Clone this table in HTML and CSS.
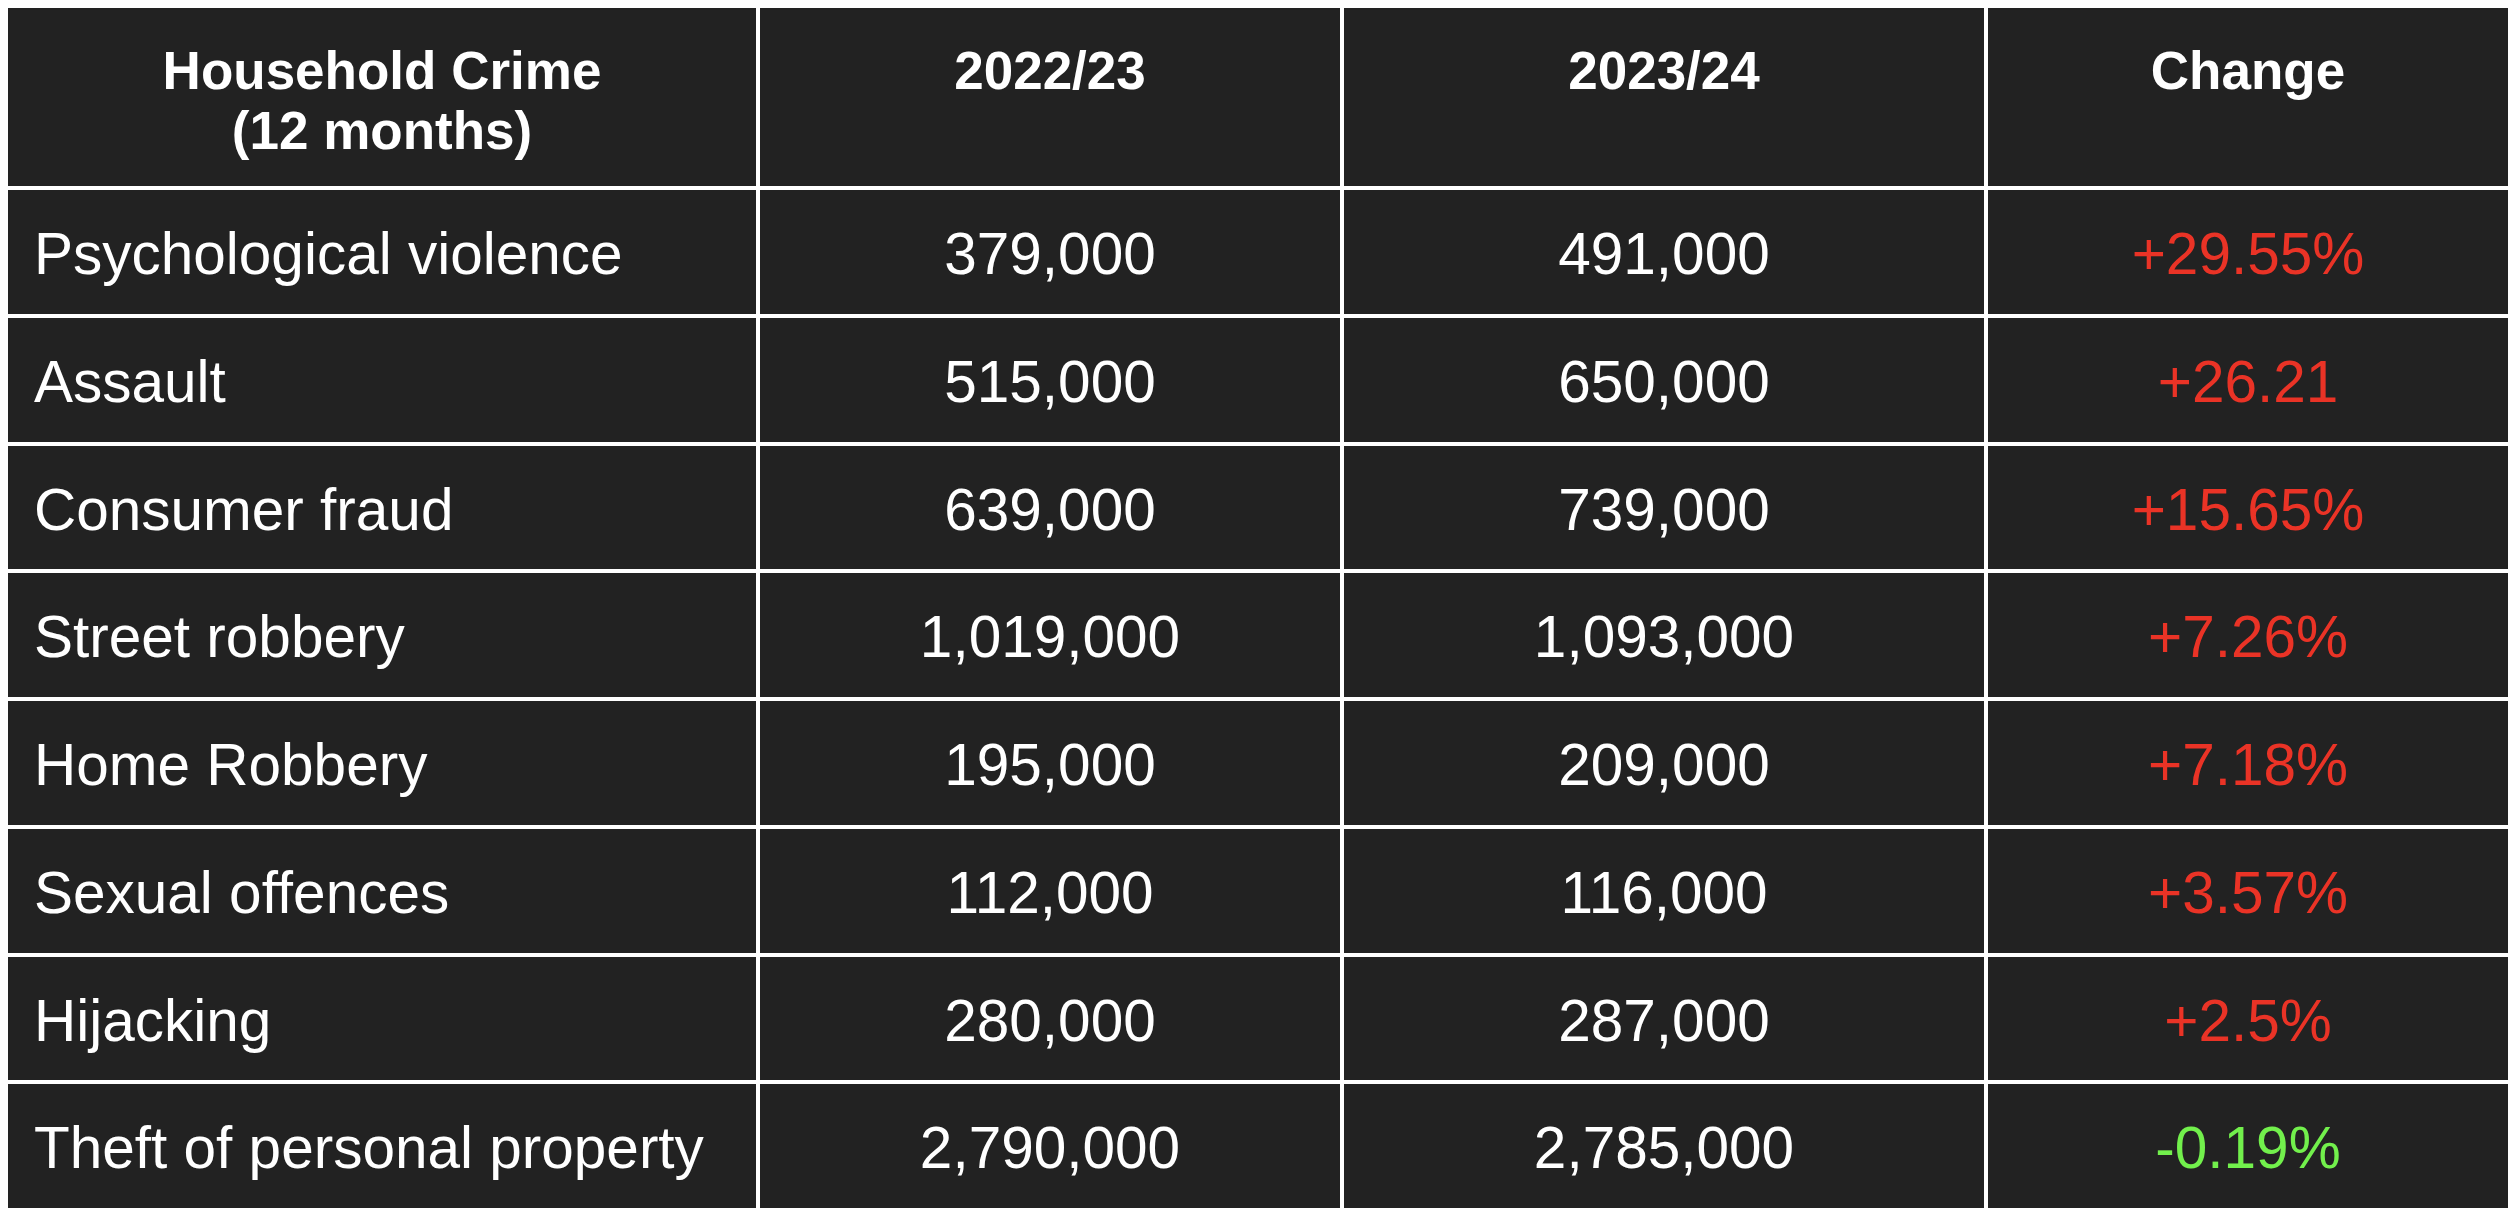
FILE: index.html
```html
<!DOCTYPE html>
<html lang="en">
<head>
<meta charset="utf-8">
<title>Household Crime</title>
<link rel="stylesheet" href="styles.css">
</head>
<body>
<div class="crime-table">
  <div class="cell head">Household Crime<br>(12 months)</div>
  <div class="cell head">2022/23</div>
  <div class="cell head">2023/24</div>
  <div class="cell head">Change</div>

  <div class="cell label">Psychological violence</div>
  <div class="cell num">379,000</div>
  <div class="cell num">491,000</div>
  <div class="cell num up">+29.55%</div>

  <div class="cell label">Assault</div>
  <div class="cell num">515,000</div>
  <div class="cell num">650,000</div>
  <div class="cell num up">+26.21</div>

  <div class="cell label">Consumer fraud</div>
  <div class="cell num">639,000</div>
  <div class="cell num">739,000</div>
  <div class="cell num up">+15.65%</div>

  <div class="cell label">Street robbery</div>
  <div class="cell num">1,019,000</div>
  <div class="cell num">1,093,000</div>
  <div class="cell num up">+7.26%</div>

  <div class="cell label">Home Robbery</div>
  <div class="cell num">195,000</div>
  <div class="cell num">209,000</div>
  <div class="cell num up">+7.18%</div>

  <div class="cell label">Sexual offences</div>
  <div class="cell num">112,000</div>
  <div class="cell num">116,000</div>
  <div class="cell num up">+3.57%</div>

  <div class="cell label">Hijacking</div>
  <div class="cell num">280,000</div>
  <div class="cell num">287,000</div>
  <div class="cell num up">+2.5%</div>

  <div class="cell label">Theft of personal property</div>
  <div class="cell num">2,790,000</div>
  <div class="cell num">2,785,000</div>
  <div class="cell num down">-0.19%</div>
</div>
</body>
</html>
```

FILE: styles.css
```css
html, body {
  margin: 0;
  padding: 0;
  background: #ffffff;
}

body {
  padding: 8px;
  font-family: "Liberation Sans", Arial, Helvetica, sans-serif;
}

.crime-table {
  display: grid;
  grid-template-columns: 748px 580px 640px 520px;
  grid-template-rows: 178px repeat(8, 1fr);
  gap: 4px;
  width: 2500px;
  height: 1200px;
  background: #ffffff;
}

.cell {
  background: #222222;
  color: #ffffff;
  display: flex;
  align-items: center;
  font-size: 58.5px;
  line-height: 1;
  padding-top: 5px;
}

.head {
  align-items: flex-start;
  justify-content: center;
  text-align: center;
  font-weight: bold;
  font-size: 53px;
  line-height: 60px;
  padding-top: 33px;
}

.label {
  padding-left: 26px;
}

.num {
  justify-content: center;
}

.up {
  color: #ea3326;
}

.down {
  color: #72f04c;
}
```
